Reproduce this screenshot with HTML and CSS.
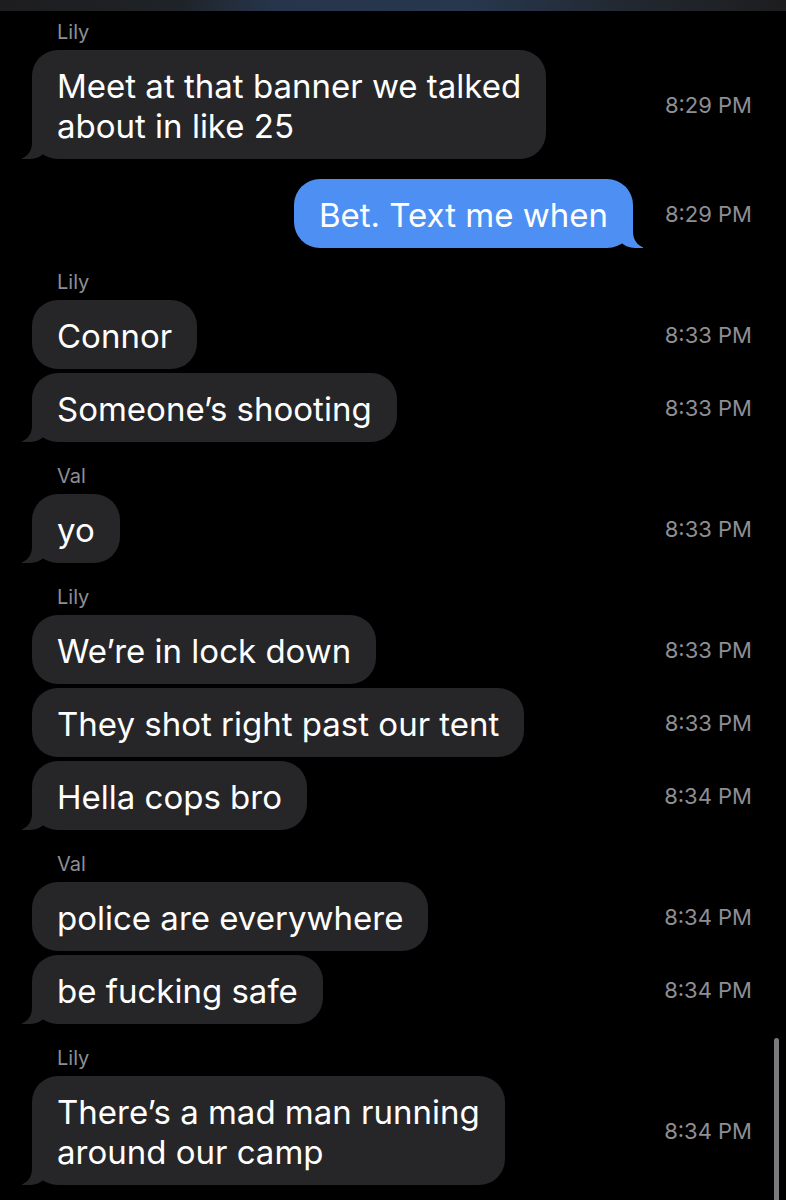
FILE: index.html
```html
<!DOCTYPE html>
<html lang="en">
<head>
<meta charset="utf-8">
<title>Messages</title>
<link rel="stylesheet" href="styles.css">
</head>
<body>
<div class="topbar"></div>
<main class="thread">
  <div class="name">Lily</div>
  <div class="row"><div class="bubble in tail">Meet at that banner we talked<br>about in like 25</div><span class="time">8:29 PM</span></div>

  <div class="row out-row"><div class="bubble out tail">Bet. Text me when</div><span class="time">8:29 PM</span></div>

  <div class="name">Lily</div>
  <div class="row"><div class="bubble in">Connor</div><span class="time">8:33 PM</span></div>
  <div class="row same"><div class="bubble in tail">Someone’s shooting</div><span class="time">8:33 PM</span></div>

  <div class="name">Val</div>
  <div class="row"><div class="bubble in tail">yo</div><span class="time">8:33 PM</span></div>

  <div class="name">Lily</div>
  <div class="row"><div class="bubble in">We’re in lock down</div><span class="time">8:33 PM</span></div>
  <div class="row same"><div class="bubble in">They shot right past our tent</div><span class="time">8:33 PM</span></div>
  <div class="row same"><div class="bubble in tail">Hella cops bro</div><span class="time">8:34 PM</span></div>

  <div class="name">Val</div>
  <div class="row"><div class="bubble in">police are everywhere</div><span class="time">8:34 PM</span></div>
  <div class="row same"><div class="bubble in tail">be fucking safe</div><span class="time">8:34 PM</span></div>

  <div class="name">Lily</div>
  <div class="row"><div class="bubble in tail">There’s a mad man running<br>around our camp</div><span class="time">8:34 PM</span></div>
</main>
<div class="scrollbar"></div>
</body>
</html>
```
FILE: styles.css
```css
* { box-sizing: border-box; }

html, body {
  margin: 0;
  padding: 0;
  background: #000;
}

body {
  font-family: Inter, "Liberation Sans", Arial, sans-serif;
  color: #fff;
  width: 786px;
  height: 1200px;
  overflow: hidden;
  position: relative;
}

.topbar {
  height: 11px;
  background: linear-gradient(90deg, #1d1d1f 0%, #1f2226 22%, #26354b 35%, #27374e 60%, #222830 80%, #1d1d1f 100%);
}

.thread {
  padding: 9px 34px 0 32px;
  display: flex;
  flex-direction: column;
}

.name {
  font-size: 20px;
  line-height: 24px;
  color: #8e8e93;
  margin: 22px 0 6px 25px;
}

.name:first-child {
  margin-top: 0;
}

.row {
  display: grid;
  grid-template-columns: 1fr 88px;
  align-items: center;
  column-gap: 31px;
}

.row.same {
  margin-top: 4px;
}

.row.out-row {
  margin-top: 20px;
}

.bubble {
  position: relative;
  font-size: 33px;
  line-height: 40px;
  padding: 16px 25px 13px;
  border-radius: 26px;
  justify-self: start;
}

.bubble.in {
  background: #262629;
}

.bubble.out {
  background: #4d8ff3;
  justify-self: end;
}

.bubble.tail::before,
.bubble.tail::after {
  content: "";
  position: absolute;
  bottom: 0;
  height: 34px;
}

.bubble.in.tail::before {
  left: -10px;
  width: 30px;
  background: #262629;
  border-bottom-right-radius: 22px 24px;
}

.bubble.in.tail::after {
  left: -20px;
  width: 20px;
  background: #000;
  border-bottom-right-radius: 14px 16px;
}

.bubble.out.tail::before {
  right: -10px;
  width: 30px;
  background: #4d8ff3;
  border-bottom-left-radius: 22px 24px;
}

.bubble.out.tail::after {
  right: -20px;
  width: 20px;
  background: #000;
  border-bottom-left-radius: 14px 16px;
}

.time {
  font-size: 22px;
  color: #8e8e93;
  text-align: right;
  white-space: nowrap;
  padding-top: 1px;
}

.scrollbar {
  position: absolute;
  left: 774px;
  top: 1038px;
  width: 5px;
  height: 175px;
  border-radius: 3px;
  background: #7a7a7d;
}
```
